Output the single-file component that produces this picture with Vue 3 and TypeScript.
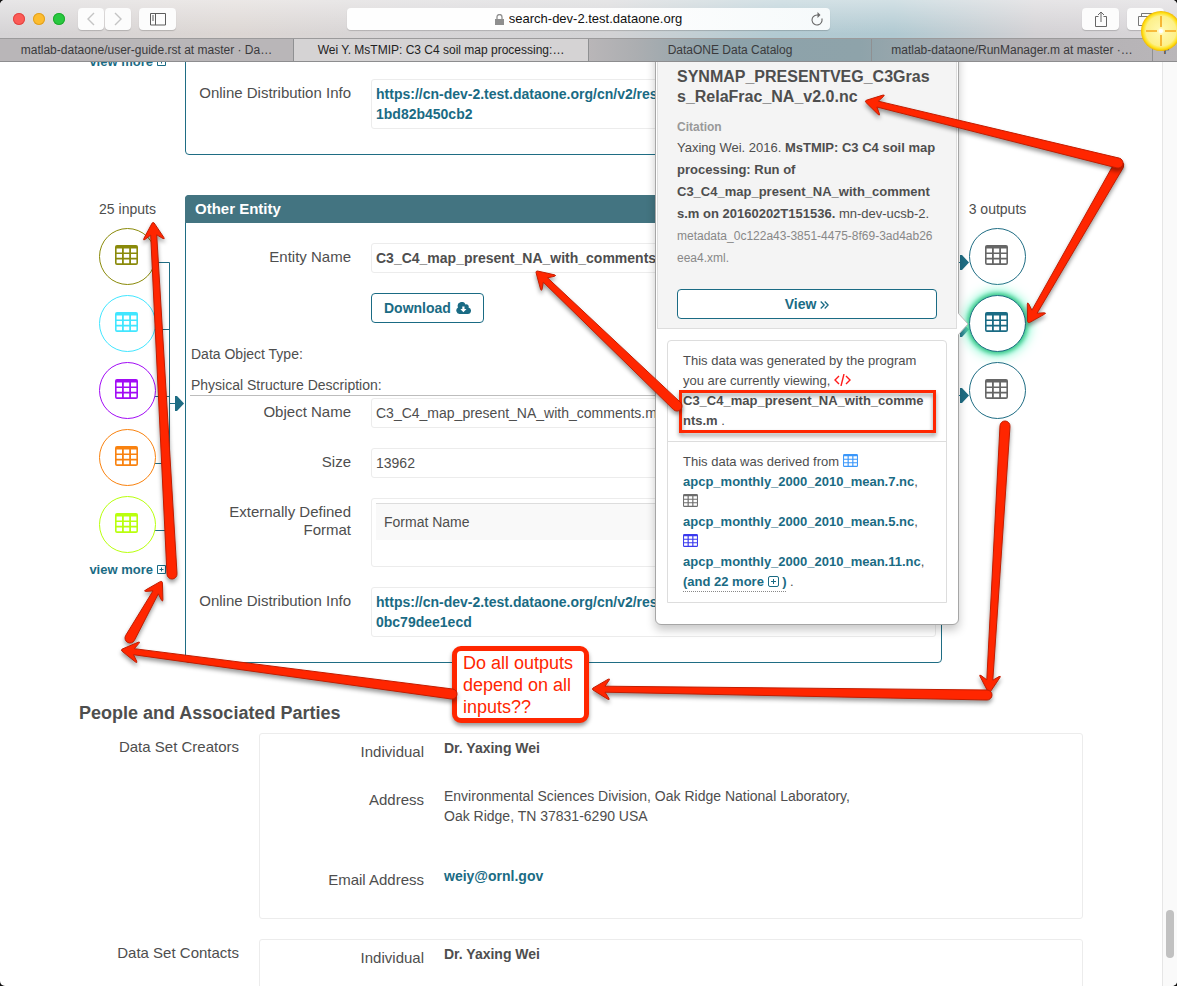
<script setup lang="ts">
import { ref } from 'vue'

const address = ref('search-dev-2.test.dataone.org')

const tabs = [
  'matlab-dataone/user-guide.rst at master · Da…',
  'Wei Y. MsTMIP: C3 C4 soil map processing:…',
  'DataONE Data Catalog',
  'matlab-dataone/RunManager.m at master ·…',
]

const inputTones = ['olive', 'cyan', 'purple', 'orange', 'lime']
const outputs = [{ active: false }, { active: true }, { active: false }]

const sources = [
  { name: 'apcp_monthly_2000_2010_mean.7.nc', tone: 'sky' },
  { name: 'apcp_monthly_2000_2010_mean.5.nc', tone: 'grey' },
  { name: 'apcp_monthly_2000_2010_mean.11.nc', tone: 'blue' },
]

// Outline of a table glyph: rounded sheet with nine cut-out cells.
const cells = [3.6, 9, 14.4]
  .map((y) => [1.6, 8.8, 16].map((x) => `M${x} ${y}h5.4v3.8h-5.4z`).join(''))
  .join('')
const tablePath = `M2 0h19a2 2 0 0 1 2 2v16a2 2 0 0 1 -2 2h-19a2 2 0 0 1 -2 -2v-16a2 2 0 0 1 2 -2z${cells}`

// Tapered arrow with a round tail, drawn from (x1, y1) to the tip (x2, y2).
function arrow(x1: number, y1: number, x2: number, y2: number): string {
  const len = Math.hypot(x2 - x1, y2 - y1)
  const ux = (x2 - x1) / len
  const uy = (y2 - y1) / len
  const at = (along: number, side: number) =>
    `${(x1 + ux * along - uy * side).toFixed(1)} ${(y1 + uy * along + ux * side).toFixed(1)}`
  return (
    `M${at(0, 5)}L${at(len - 13, 3)}L${at(len - 17, 9)}Q${at(len - 18, 11)} ${at(len - 16, 10)}L${at(len - 1, 1)}` +
    `Q${at(len, 0)} ${at(len - 1, -1)}L${at(len - 16, -10)}Q${at(len - 18, -11)} ${at(len - 17, -9)}` +
    `L${at(len - 13, -3)}L${at(0, -5)}A5 5 0 0 0 ${at(0, 5)}Z`
  )
}

const arrows = [
  arrow(1119, 165, 1028, 323),
  arrow(1118, 163, 865, 101),
  arrow(677, 406, 536, 271),
  arrow(172, 574, 153, 222),
  arrow(130, 638, 162, 581),
  arrow(452, 694, 121, 650),
  arrow(1005, 426, 989, 693),
  arrow(987, 695, 592, 689),
]
</script>

<template>
  <div class="window">
    <header class="toolbar">
      <div class="controls">
        <button class="light red" aria-label="Close"></button>
        <button class="light amber" aria-label="Minimize"></button>
        <button class="light green" aria-label="Zoom"></button>
        <button class="tool nav first" aria-label="Back">
          <svg width="8" height="14" viewBox="0 0 8 14"><path d="M7 1L1 7l6 6" fill="none" stroke="#c4c4c4" stroke-width="1.4" /></svg>
        </button>
        <button class="tool nav" aria-label="Forward">
          <svg width="8" height="14" viewBox="0 0 8 14"><path d="M1 1l6 6-6 6" fill="none" stroke="#c4c4c4" stroke-width="1.4" /></svg>
        </button>
        <button class="tool side" aria-label="Sidebar">
          <svg width="16" height="13" viewBox="0 0 16 13"><path d="M.5.5h15v11.5h-15zM5.5.5v11.5M2 3h2M2 5h2M2 7h2" fill="none" stroke="#5c5c5c" /></svg>
        </button>
      </div>
      <div class="address">
        <svg width="9" height="11" viewBox="0 0 9 11"><path d="M0 5h9v6H0z" fill="#8f8f8f" /><path d="M2 5V3a2.5 2.5 0 0 1 5 0v2" fill="none" stroke="#8f8f8f" stroke-width="1.3" /></svg>
        <input v-model="address" aria-label="Address" size="29" />
        <button class="reload" aria-label="Reload">
          <svg width="12" height="14" viewBox="0 0 12 14"><path d="M10.8 6.5A5 5 0 1 1 6 3h1.5" fill="none" stroke="#6a6a6a" stroke-width="1.1" /><path d="M6.5 0l3 3-3 3z" fill="#6a6a6a" /></svg>
        </button>
      </div>
      <div class="actions">
        <button class="tool side" aria-label="Share">
          <svg width="12" height="16" viewBox="0 0 12 16"><path d="M3.5 5.5h-3v10h11v-10h-3M6 11V1M3 4l3-3 3 3" fill="none" stroke="#666" /></svg>
        </button>
        <button class="tool side" aria-label="Show all tabs">
          <svg width="15" height="13" viewBox="0 0 15 13"><path d="M3.5 3V.5h11v8H12M.5 3.5h11v9H.5z" fill="none" stroke="#777" /></svg>
        </button>
      </div>
    </header>

    <nav class="tabs" aria-label="Tabs">
      <button v-for="(tab, i) in tabs" :key="tab" :class="['tab', { current: i === 1 }]">{{ tab }}</button>
      <button class="tab add" aria-label="New tab">+</button>
    </nav>

    <div class="view">
      <main class="page">
        <section class="entity">
          <div class="column ins"><a class="more" href="#more">view more
            <svg width="9" height="9" viewBox="0 0 9 9"><path d="M.5.5h8v8h-8zM4.5 2.500v4M2.500 4.500h4" fill="none" stroke="currentColor" /></svg></a></div>
          <div class="card partial">
            <div class="row">
              <span class="label">Online Distribution Info</span>
              <div class="box"><a href="#r1">https://cn-dev-2.test.dataone.org/cn/v2/res<br />1bd82b450cb2</a></div>
            </div>
          </div>
        </section>

        <section class="entity">
          <div class="column ins">
            <svg class="wires" width="106" height="340" viewBox="0 0 106 340">
              <path d="M70 67.5h20.500v268H70M70 134.500h20.500M70 201.500h20.500M70 268.500h20.500M90.500 208.500h10" fill="none" stroke="#1f6d84" />
              <path d="M96 201h2l7 7.500-7 7.500h-2z" fill="#1f6d84" />
            </svg>
            <p class="count">25 inputs</p>
            <button v-for="tone in inputTones" :key="tone" :class="['node', tone]" aria-label="Input data">
              <svg width="23" height="20" viewBox="0 0 23 20"><path :d="tablePath" fill="currentColor" fill-rule="evenodd" /></svg>
            </button>
            <a class="more" href="#more">view more
              <svg width="9" height="9" viewBox="0 0 9 9"><path d="M.5.5h8v8h-8zM4.5 2.500v4M2.500 4.500h4" fill="none" stroke="currentColor" /></svg></a>
          </div>

          <div class="card">
            <h3>Other Entity</h3>
            <div class="row">
              <span class="label">Entity Name</span>
              <div class="box"><b>C3_C4_map_present_NA_with_comments.m</b></div>
            </div>
            <div class="row">
              <span></span>
              <button class="outline download">Download
                <svg width="15" height="12" viewBox="0 0 15 12"><path d="M3.5 12a3.500 3.500 0 0 1 -1.500-6.500A4 4 0 0 1 9.500 2.600 2.200 2.200 0 0 1 12.500 5.500 3.300 3.300 0 0 1 11.800 12z" fill="currentColor" /><path d="M6.300 4.500h2.200v2.500h2L7.400 10.300 4.300 7h2z" fill="#fff" /></svg>
              </button>
            </div>
            <p class="line">Data Object Type:</p>
            <p class="line ruled">Physical Structure Description:</p>
            <div class="row tight">
              <span class="label">Object Name</span>
              <div class="box">C3_C4_map_present_NA_with_comments.m</div>
            </div>
            <div class="row">
              <span class="label">Size</span>
              <div class="box">13962</div>
            </div>
            <div class="row">
              <span class="label">Externally Defined Format</span>
              <div class="box">
                <table><thead><tr><th scope="col">Format Name</th></tr></thead></table>
              </div>
            </div>
            <div class="row">
              <span class="label">Online Distribution Info</span>
              <div class="box"><a href="#r2">https://cn-dev-2.test.dataone.org/cn/v2/res<br />0bc79dee1ecd</a></div>
            </div>
          </div>

          <div class="column outs">
            <svg class="wires" width="28" height="220" viewBox="0 0 28 220">
              <path d="M0 67.5h20M0 134.500h20M0 200.500h20" stroke="#1f6d84" />
              <path d="M18 60h2l7 7.500-7 7.500h-2zM18 127h2l7 7.500-7 7.500h-2zM18 193h2l7 7.500-7 7.500h-2z" fill="#1f6d84" />
            </svg>
            <p class="count">3 outputs</p>
            <button v-for="(out, i) in outputs" :key="i" :class="['node', 'out', { active: out.active }]" aria-label="Output data">
              <svg width="23" height="20" viewBox="0 0 23 20"><path :d="tablePath" fill="currentColor" fill-rule="evenodd" /></svg>
            </button>

            <aside class="popover">
              <svg class="beak" width="11" height="22" viewBox="0 0 11 22"><path d="M0 0l10 11L0 22z" fill="#fff" /><path d="M0 0l10 11L0 22" fill="none" stroke="#bbb" /></svg>
              <div class="summary">
                <h4>SYNMAP_PRESENTVEG_C3Grass_RelaFrac_NA_v2.0.nc</h4>
                <h5>Citation</h5>
                <p class="cite">Yaxing Wei. 2016. <b>MsTMIP: C3 C4 soil map processing: Run of C3_C4_map_present_NA_with_comments.m on 20160202T151536.</b> mn-dev-ucsb-2. <small>metadata_0c122a43-3851-4475-8f69-3ad4ab26eea4.xml.</small></p>
                <button class="outline">View
                  <svg width="9" height="8" viewBox="0 0 9 8"><path d="M.7.5L4.200 4 .7 7.500M4.700.5L8.200 4 4.700 7.500" fill="none" stroke="currentColor" stroke-width="1.3" /></svg>
                </button>
              </div>
              <ul>
                <li>This data was generated by the program you are currently viewing,
                  <svg width="17" height="12" viewBox="0 0 17 12"><path d="M5 2L1 6l4 4M12 2l4 4-4 4M10 0L7 12" fill="none" stroke="#ff1a1a" stroke-width="1.4" /></svg>
                  <b>C3_C4_map_present_NA_with_comments.m</b> .</li>
                <li>This data was derived from
                  <template v-for="s in sources" :key="s.name">
                    <svg :class="s.tone" width="15" height="13" viewBox="0 0 23 20"><path :d="tablePath" fill="currentColor" fill-rule="evenodd" /></svg>
                    {{ ' ' }}<a href="#source">{{ s.name }}</a>,<br />
                  </template>
                  <a class="rest" href="#rest">(and 22 more <svg width="11" height="11" viewBox="0 0 11 11"><rect x=".5" y=".5" width="10" height="10" rx="1.5" fill="none" stroke="currentColor" /><path d="M5.5 3v5M3 5.500h5" stroke="currentColor" /></svg> )</a> .</li>
              </ul>
            </aside>
          </div>
        </section>

        <section class="people">
          <h2>People and Associated Parties</h2>
          <div class="party">
            <span class="who">Data Set Creators</span>
            <div class="panel">
              <span class="label">Individual</span>
              <b>Dr. Yaxing Wei</b>
              <span class="label">Address</span>
              <span>Environmental Sciences Division, Oak Ridge National Laboratory,<br />Oak Ridge, TN 37831-6290 USA</span>
              <span class="label">Email Address</span>
              <a href="mailto:weiy@ornl.gov">weiy@ornl.gov</a>
            </div>
          </div>
          <div class="party">
            <span class="who">Data Set Contacts</span>
            <div class="panel">
              <span class="label">Individual</span>
              <b>Dr. Yaxing Wei</b>
            </div>
          </div>
        </section>
      </main>
      <div class="track"><div class="thumb"></div></div>
    </div>

    <div class="note">Do all outputs depend on all inputs??</div>
    <svg class="marks" width="1177" height="986" viewBox="0 0 1177 986">
      <defs>
        <radialGradient id="sun">
          <stop offset="0" stop-color="#fffff0" />
          <stop offset=".2" stop-color="#fff7a8" />
          <stop offset=".75" stop-color="#fdf08a" />
          <stop offset=".9" stop-color="#ffe11a" />
          <stop offset="1" stop-color="#f0b800" />
        </radialGradient>
      </defs>
      <rect class="red-mark" x="680.5" y="391.5" width="254" height="40" fill="none" stroke="#ff2600" stroke-width="3" />
      <path v-for="(d, i) in arrows" :key="i" class="red-mark" :d="d" fill="#ff2600" stroke="#c21d00" stroke-linejoin="round" />
      <circle cx="1161" cy="31" r="20" fill="url(#sun)" />
      <path d="M1161 16v11M1161 35v11M1146 31h11M1165 31h11" stroke="#f5a81c" stroke-width="1.6" />
      <circle cx="1161" cy="31" r="2" fill="#fff" />
    </svg>
  </div>
</template>

<style>
body {
  background: #111;
}
</style>

<style scoped>
* {
  box-sizing: border-box;
}
.window {
  position: relative;
  display: flex;
  flex-direction: column;
  height: 100vh;
  overflow: hidden;
  border-radius: 5px;
  background: #fff;
  color: #4e4e4e;
  font: 14px/20px "Liberation Sans", Arial, sans-serif;
}
button {
  padding: 0;
  border: 0;
  background: none;
  color: inherit;
  font: inherit;
}
a {
  color: #1a6b84;
  font-weight: bold;
  text-decoration: none;
}
h2, h3, h4, h5, p, ul {
  margin: 0;
  padding: 0;
}

.toolbar {
  display: grid;
  grid-template-columns: 347fr 483fr 347fr;
  align-items: center;
  flex: none;
  height: 38px;
  background:
    linear-gradient(#ffffff70, #ffffff00 90%),
    linear-gradient(90deg, #d5d3d5 0, #dcd6d3 20%, #d6d4d6 35%, #d2d2d4 52%, #b2cad2 66%, #b0c9d1 76%, #d3d1d4 88%, #d8d5d8);
}
.controls, .actions {
  display: flex;
  align-items: center;
}
.controls {
  gap: 8px;
  padding-left: 13px;
}
.actions {
  justify-content: flex-end;
  gap: 8px;
  padding-right: 13px;
}
.light {
  width: 12px;
  height: 12px;
  border-radius: 6px;
}
.red { background: #fc5b57; box-shadow: inset 0 0 0 1px #e04644; }
.amber { background: #fdbc2e; box-shadow: inset 0 0 0 1px #dfa023; }
.green { background: #28c83f; box-shadow: inset 0 0 0 1px #1faa2f; }
.tool {
  display: flex;
  align-items: center;
  justify-content: center;
  height: 22px;
  border-radius: 4px;
  background: #fcfcfc;
  box-shadow: 0 1px 1px #0000002e;
}
.nav {
  width: 26px;
  margin-left: -7px;
}
.first {
  margin-left: 5px;
}
.side {
  width: 37px;
}
.address {
  position: relative;
  display: flex;
  align-items: center;
  justify-content: center;
  gap: 5px;
  height: 22px;
  border-radius: 4px;
  background: linear-gradient(90deg, #fefefe 50%, #f6fafb);
  box-shadow: 0 1px 1px #0000002e;
}
.address input {
  field-sizing: content;
  padding: 0;
  border: 0;
  outline: 0;
  background: none;
  color: #111;
  font: 13px/20px "Liberation Sans", Arial, sans-serif;
}
.reload {
  position: absolute;
  right: 7px;
  display: flex;
}

.tabs {
  display: grid;
  grid-template-columns: 294fr 295fr 283fr 281fr 24px;
  flex: none;
  height: 24px;
  border-top: 1px solid #9b9a9b;
  border-bottom: 1px solid #8d8d8f;
  background: linear-gradient(90deg, #b9b6b8 50%, #acaeb1 54%, #8da2aa 61%, #8ea3aa 73%, #b2afb2 86%, #b9b6b9);
}
.tab {
  overflow: hidden;
  padding: 0 8px;
  border-right: 1px solid #8f9092;
  color: #3a3a3c;
  font-size: 12px;
  line-height: 22px;
  white-space: nowrap;
}
.current {
  background: #d5d3d4;
  color: #222;
}
.add {
  padding: 0;
  border: 0;
  font-size: 16px;
}

.view {
  display: flex;
  flex: 1;
  min-height: 0;
  overflow: hidden;
  isolation: isolate;
}
.page {
  flex: 1;
  margin-top: -10px;
  padding: 0 79px;
}
.track {
  width: 15px;
  padding-top: 848px;
  border-left: 1px solid #e6e6e6;
  background: #fafafa;
}
.thumb {
  width: 8px;
  height: 48px;
  margin-left: 3px;
  border-radius: 4px;
  background: #c1c1c1;
}

.entity {
  display: grid;
  grid-template-columns: 106px 1fr 141px;
  margin-bottom: 40px;
}
.column {
  position: relative;
  display: flex;
  flex-direction: column;
  align-items: center;
  gap: 10px;
}
.ins {
  padding-right: 9px;
}
.outs {
  padding-right: 30px;
}
.count {
  padding-top: 4px;
}
.more {
  font-size: 13px;
  white-space: nowrap;
}
.node + .more {
  margin-top: -3px;
}
.wires {
  position: absolute;
  top: 0;
  left: 0;
}
.node {
  position: relative;
  display: flex;
  align-items: center;
  justify-content: center;
  flex: none;
  width: 57px;
  height: 57px;
  padding: 0 2px 3px 0;
  border: 1px solid currentColor;
  border-radius: 50%;
  background: #fff;
}
.count + .node {
  margin-top: -1px;
}
.olive { color: #8a8a0a; }
.cyan { color: #41e6ff; }
.purple { color: #a20cf5; }
.orange { color: #f9820f; }
.lime { color: #b9ff0d; }
.sky { color: #3b97fa; }
.grey { color: #6d6d6d; }
.blue { color: #3a3aee; }
.out {
  border-color: #1f6d84;
  color: #666;
}
.active {
  color: #1a6b84;
  box-shadow: 0 0 4px 2px #37c486, 0 0 12px 4px #7cf7cd;
}

.card {
  padding: 0 5px 25px 0;
  border: 1px solid #1f6d84;
  border-radius: 4px;
}
.partial {
  padding-top: 25px;
}
.card h3 {
  margin: -1px -6px 0 -1px;
  padding: 4px 10px;
  border-radius: 4px 4px 0 0;
  background: #437481;
  color: #fff;
  font-size: 15px;
}
.row {
  display: grid;
  grid-template-columns: 165px 1fr;
  gap: 20px;
  margin-top: 20px;
}
.partial .row {
  margin-top: 1px;
}
.tight {
  margin-top: 2px;
}
.label {
  padding-top: 5px;
  font-size: 15px;
  line-height: 18px;
  text-align: right;
}
.row:has(table) .label {
  padding-left: 30px;
}
.box {
  min-width: 0;
  padding: 4px;
  border: 1px solid #ececec;
  border-radius: 3px;
}
.outline {
  height: 30px;
  border: 1px solid #1a6b84;
  border-radius: 4px;
  background: #fff;
  color: #1a6b84;
  font-weight: bold;
}
.download {
  justify-self: start;
  padding: 0 12px;
}
.download svg {
  margin-left: 1px;
  vertical-align: -1px;
}
.line {
  margin: 21px 0 0 4px;
  padding-left: 1px;
}
.ruled {
  margin-top: 11px;
  border-bottom: 1px solid #bdbdbd;
}
table {
  width: 100%;
  margin-bottom: 22px;
  border-spacing: 0;
  border-top: 1px solid #ddd;
}
th {
  padding: 8px;
  background: #f9f9f9;
  font-weight: normal;
  text-align: left;
}

.popover {
  position: absolute;
  z-index: 2;
  top: -149px;
  right: 124px;
  width: 304px;
  padding: 1px 1px 21px;
  border: 1px solid #a6a6a6;
  border-radius: 6px;
  background: #fff;
  box-shadow: 0 5px 10px #00000038;
}
.beak {
  position: absolute;
  top: 266px;
  right: -11px;
}
.summary {
  padding: 18px 19px 9px;
  border: 1px solid #ddd;
  background: #f4f4f4;
}
.summary h4 {
  font-size: 16px;
  overflow-wrap: anywhere;
}
.summary h5 {
  margin-top: 10px;
  color: #999;
  font-size: 12px;
}
.cite {
  margin-bottom: 20px;
  font-size: 13px;
  line-height: 22px;
  overflow-wrap: anywhere;
}
.cite small {
  color: #888;
  font-size: 12px;
  word-break: break-all;
}
.summary .outline {
  width: 100%;
}
ul {
  margin: 11px 10px 0;
  border: 1px solid #ddd;
  border-radius: 4px 4px 0 0;
  font-size: 13px;
  list-style: none;
}
li {
  padding: 10px 15px;
  overflow-wrap: anywhere;
}
li + li {
  border-top: 1px solid #ddd;
}
li svg {
  vertical-align: -1px;
}
.rest {
  padding-bottom: 2px;
  border-bottom: 1px dotted #888;
}

.people h2 {
  margin-bottom: 10px;
  font-size: 18px;
  line-height: 20px;
}
.party {
  display: grid;
  grid-template-columns: 160px 1fr;
  gap: 20px;
  margin-bottom: 20px;
}
.who {
  padding-top: 4px;
  font-size: 15px;
  text-align: right;
}
.panel {
  display: grid;
  grid-template-columns: 164px 1fr;
  grid-template-rows: 48px 80px 48px;
  column-gap: 20px;
  padding: 4px 0;
  border: 1px solid #ececec;
  border-radius: 3px;
}

.note {
  position: absolute;
  top: 646px;
  left: 452px;
  width: 137px;
  padding: 1px 6px 0;
  border: 5px solid #ff2600;
  border-radius: 9px;
  background: #fff;
  box-shadow: 0 3px 4px #00000066;
  color: #ff2600;
  font-size: 18px;
  line-height: 22px;
}
.marks {
  position: absolute;
  top: 0;
  left: 0;
  pointer-events: none;
}
.red-mark {
  filter: drop-shadow(0 3px 2px #00000066);
}
</style>
